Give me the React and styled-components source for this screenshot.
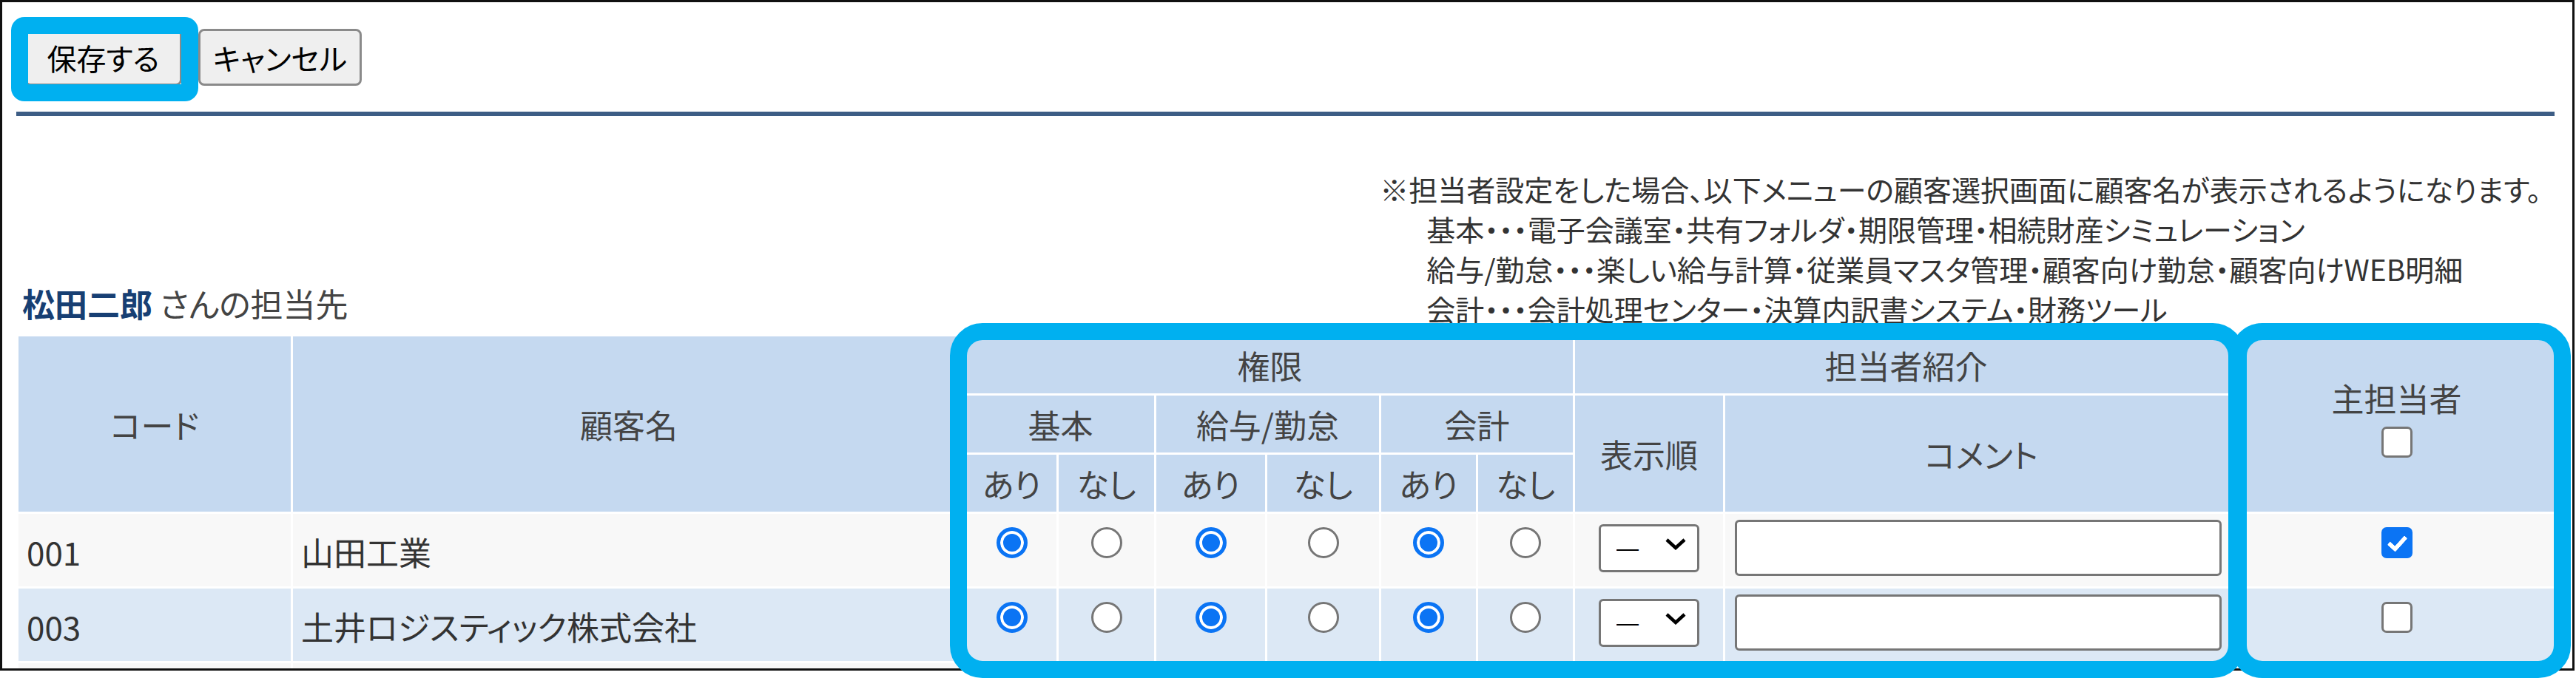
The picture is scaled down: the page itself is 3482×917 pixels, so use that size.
import React from 'react';
import styled, { createGlobalStyle } from 'styled-components';

const GlobalStyle = createGlobalStyle`
  html, body {
    margin: 0;
    padding: 0;
    background: #fff;
  }
  body {
    font-family: "Noto Sans CJK JP", "Noto Sans", sans-serif;
    font-feature-settings: "palt";
    color: #333;
  }
`;

const Stage = styled.div`
  position: relative;
  width: 3482px;
  height: 917px;
  overflow: hidden;
`;

const Frame = styled.div`
  box-sizing: border-box;
  width: 3480px;
  height: 907px;
  border: 3px solid #111;
  padding: 36px 24px 0 19px;
  overflow: hidden;
`;

const Toolbar = styled.div`
  display: flex;
  gap: 22px;
  padding-left: 11px;
`;

const Button = styled.button`
  box-sizing: border-box;
  width: ${(p) => p.$w}px;
  height: 77px;
  padding: 0;
  font-family: inherit;
  font-feature-settings: "palt";
  font-size: 40px;
  line-height: 1;
  color: #000;
  background: #efefef;
  border: 3px solid #8a8a8a;
  border-radius: 8px;
`;

const Rule = styled.hr`
  margin: 35px 0 0;
  border: 0;
  height: 6px;
  background: #3d5d85;
`;

const InfoRow = styled.div`
  display: flex;
  justify-content: space-between;
  align-items: flex-end;
  margin-top: 71px;
`;

const Owner = styled.div`
  margin: 0 0 4px 8px;
  font-size: 44px;
  line-height: 60px;
  color: #444;

  strong {
    color: #173f73;
    font-weight: 700;
  }
`;

const Note = styled.div`
  margin-right: 18px;
  font-size: 39px;
  line-height: 54px;
  color: #333;
`;

const NoteLine = styled.div`
  padding-left: ${(p) => (p.$indent ? 63 : 0)}px;
  white-space: nowrap;
`;

const Table = styled.table`
  margin-top: 8px;
  width: 3433px;
  table-layout: fixed;
  border-collapse: separate;
  border-spacing: 3px;
  font-size: 44px;
`;

const HeadRow = styled.tr`
  height: 77px;
`;

const Th = styled.th`
  padding: 0 0 ${(p) => p.$pb || 0}px;
  background: #c5d9f0;
  color: #444;
  font-weight: 400;
  line-height: 60px;
  text-align: center;
  vertical-align: middle;
  white-space: nowrap;
`;

const HeadStack = styled.div`
  display: flex;
  flex-direction: column;
  align-items: center;
`;

const Row = styled.tr`
  height: 98px;

  & > td {
    background: ${(p) => (p.$alt ? '#dce8f5' : '#f8f8f8')};
  }
`;

const Td = styled.td`
  padding: ${(p) => (p.$text ? '21px 0 0 11px' : '0')};
  vertical-align: top;
  text-align: ${(p) => p.$align || 'center'};
  line-height: 60px;
  color: #333;
  white-space: nowrap;
`;

const Radio = styled.input.attrs({ type: 'radio' })`
  appearance: none;
  box-sizing: border-box;
  width: 42px;
  height: 42px;
  margin: 18px 0 0;
  border: 3px solid #767676;
  border-radius: 50%;
  background: #fff;
  vertical-align: top;

  &:checked {
    border: 5px solid #0b74f4;
    background: #0b74f4;
    box-shadow: inset 0 0 0 4px #fff;
  }
`;

const Check = styled.input.attrs({ type: 'checkbox' })`
  appearance: none;
  position: relative;
  box-sizing: border-box;
  width: 42px;
  height: 42px;
  margin: ${(p) => p.$m || '18px 0 0'};
  border: 3px solid #767676;
  border-radius: 7px;
  background: #fff;
  vertical-align: top;

  &:checked {
    background: #0b74f4;
    border-color: #0b74f4;
  }

  &:checked::after {
    content: '';
    position: absolute;
    left: 11px;
    top: 4px;
    box-sizing: border-box;
    width: 15px;
    height: 25px;
    border: solid #fff;
    border-width: 0 6px 6px 0;
    border-radius: 2px;
    transform: rotate(42deg);
  }
`;

const SelectWrap = styled.div`
  position: relative;
  display: inline-block;
  margin-top: 8px;
  vertical-align: top;
`;

const Select = styled.select`
  appearance: none;
  box-sizing: border-box;
  width: 136px;
  height: 65px;
  padding: 0 0 0 21px;
  border: 3px solid #767676;
  border-radius: 6px;
  background: #fff;
  font-family: "Liberation Sans", sans-serif;
  font-size: 30px;
  color: #000;
`;

const Chevron = styled.svg`
  position: absolute;
  right: 17px;
  top: 24px;
  pointer-events: none;
`;

const TextInput = styled.input.attrs({ type: 'text' })`
  box-sizing: border-box;
  width: 658px;
  height: 76px;
  margin: 8px 0 0 13px;
  border: 3px solid #767676;
  border-radius: 6px;
  background: #fff;
  vertical-align: top;
`;

const Highlight = styled.div`
  position: absolute;
  left: ${(p) => p.$x}px;
  top: ${(p) => p.$y}px;
  width: ${(p) => p.$w}px;
  height: ${(p) => p.$h}px;
  box-sizing: border-box;
  border: 23px solid #00b0f0;
  border-radius: ${(p) => p.$r}px;
  pointer-events: none;
`;

const colWidths = [368, 908, 121, 129, 147, 151, 128, 128, 200, 692, 425];

const groups = ['kihon', 'kyuyo', 'kaikei'];

const customers = [
  { code: '001', name: '山田工業', main: true },
  { code: '003', name: '土井ロジスティック株式会社', main: false },
];

const noteLines = [
  '※担当者設定をした場合、以下メニューの顧客選択画面に顧客名が表示されるようになります。',
  '基本・・・電子会議室・共有フォルダ・期限管理・相続財産シミュレーション',
  '給与/勤怠・・・楽しい給与計算・従業員マスタ管理・顧客向け勤怠・顧客向けWEB明細',
  '会計・・・会計処理センター・決算内訳書システム・財務ツール',
];

const OrderSelect = () => (
  <SelectWrap>
    <Select defaultValue="">
      <option value="">—</option>
      <option value="1">1</option>
      <option value="2">2</option>
    </Select>
    <Chevron width="30" height="17" viewBox="0 0 30 17">
      <path d="M3 3 L15 14 L27 3" fill="none" stroke="#000" strokeWidth="4.5" />
    </Chevron>
  </SelectWrap>
);

const App = () => {
  return (
    <Stage>
      <GlobalStyle />
      <Frame>
        <Toolbar>
          <Button $w={213}>保存する</Button>
          <Button $w={221}>キャンセル</Button>
        </Toolbar>

        <Rule />

        <InfoRow>
          <Owner>
            <strong>松田二郎</strong> さんの担当先
          </Owner>
          <Note>
            {noteLines.map((line, i) => (
              <NoteLine key={line} $indent={i > 0}>
                {line}
              </NoteLine>
            ))}
          </Note>
        </InfoRow>

        <Table>
          <colgroup>
            {colWidths.map((w, i) => (
              <col key={i} style={{ width: w }} />
            ))}
          </colgroup>
          <thead>
            <HeadRow>
              <Th rowSpan={3}>コード</Th>
              <Th rowSpan={3}>顧客名</Th>
              <Th colSpan={6}>権限</Th>
              <Th colSpan={2}>担当者紹介</Th>
              <Th rowSpan={3} $pb={20}>
                <HeadStack>
                  主担当者
                  <Check $m="9px 0 0" />
                </HeadStack>
              </Th>
            </HeadRow>
            <HeadRow>
              <Th colSpan={2}>基本</Th>
              <Th colSpan={2}>給与/勤怠</Th>
              <Th colSpan={2}>会計</Th>
              <Th rowSpan={2}>表示順</Th>
              <Th rowSpan={2}>コメント</Th>
            </HeadRow>
            <HeadRow>
              {groups.map((g) => (
                <React.Fragment key={g}>
                  <Th>あり</Th>
                  <Th>なし</Th>
                </React.Fragment>
              ))}
            </HeadRow>
          </thead>
          <tbody>
            {customers.map((c, i) => (
              <Row key={c.code} $alt={i % 2 === 1}>
                <Td $text $align="left">{c.code}</Td>
                <Td $text $align="left">{c.name}</Td>
                {groups.map((g) => (
                  <React.Fragment key={g}>
                    <Td>
                      <Radio name={`${c.code}-${g}`} defaultChecked />
                    </Td>
                    <Td>
                      <Radio name={`${c.code}-${g}`} />
                    </Td>
                  </React.Fragment>
                ))}
                <Td>
                  <OrderSelect />
                </Td>
                <Td $align="left">
                  <TextInput />
                </Td>
                <Td>
                  <Check defaultChecked={c.main} />
                </Td>
              </Row>
            ))}
            <Row>
              {colWidths.map((w, i) => (
                <Td key={i} />
              ))}
            </Row>
          </tbody>
        </Table>
      </Frame>

      <Highlight $x={15} $y={23} $w={253} $h={114} $r={18} />
      <Highlight $x={1284} $y={437} $w={1751} $h={480} $r={44} />
      <Highlight $x={3014} $y={437} $w={461} $h={480} $r={44} />
    </Stage>
  );
};

export default App;
